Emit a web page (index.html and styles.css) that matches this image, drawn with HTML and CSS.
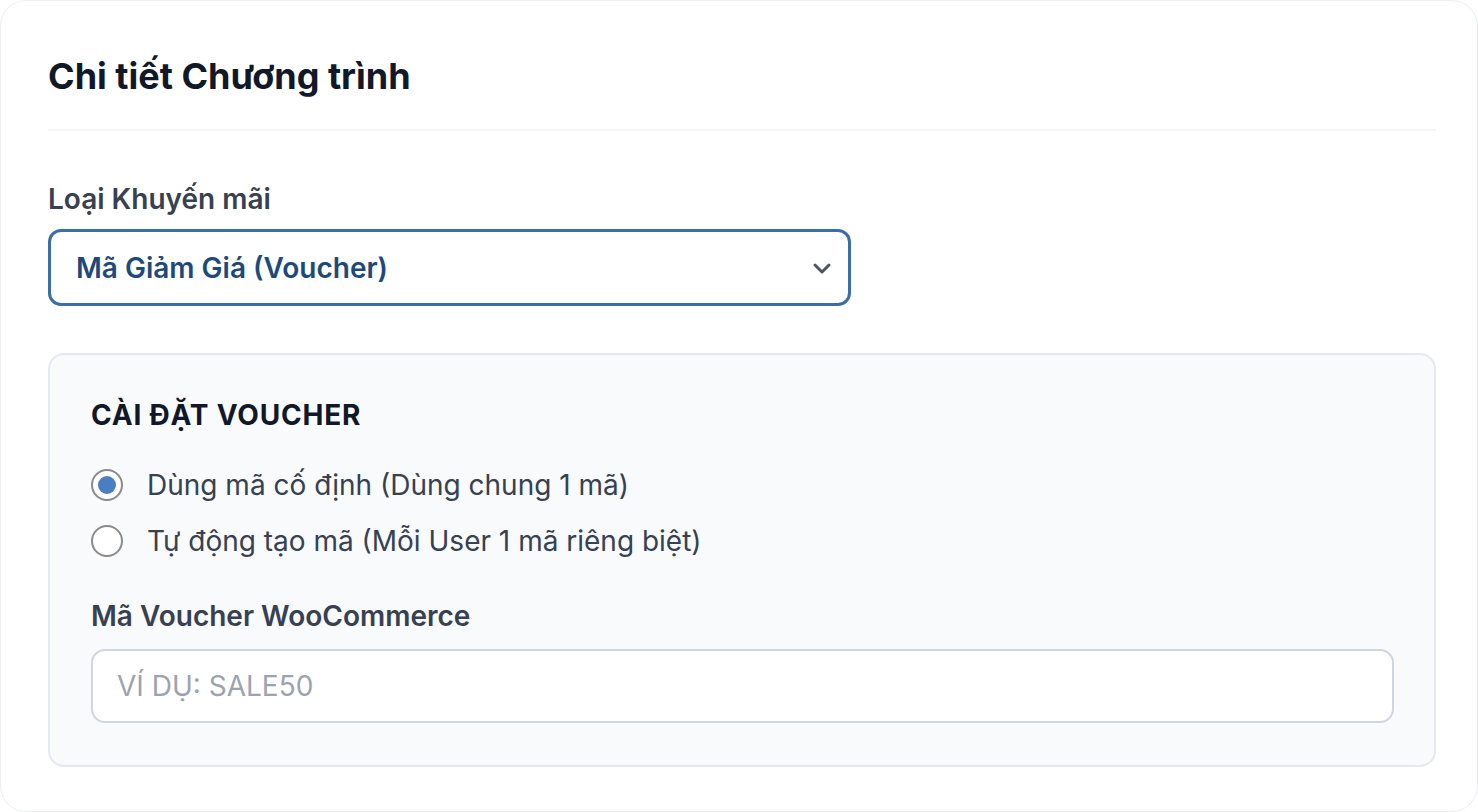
FILE: index.html
```html
<!DOCTYPE html>
<html lang="vi">
<head>
  <meta charset="UTF-8">
  <meta name="viewport" content="width=device-width, initial-scale=1.0">
  <title>Chi tiết Chương trình</title>
  <link rel="stylesheet" href="styles.css">
</head>
<body>
  <div class="card">
    <div class="card-header">
      <h2 class="card-title">Chi tiết Chương trình</h2>
    </div>

    <div class="field">
      <label class="field-label" for="promo-type">Loại Khuyến mãi</label>
      <div class="select-wrap">
        <select id="promo-type" class="select">
          <option>Mã Giảm Giá (Voucher)</option>
          <option>Giảm giá trực tiếp</option>
          <option>Quà tặng</option>
        </select>
        <svg class="chevron" width="24" height="24" viewBox="0 0 24 24" fill="none" stroke="currentColor" stroke-width="3" stroke-linecap="round" stroke-linejoin="round"><path d="M5 9l7 7 7-7"/></svg>
      </div>
    </div>

    <div class="voucher-box">
      <h3 class="box-title">CÀI ĐẶT VOUCHER</h3>
      <div class="radio-list">
        <label class="radio">
          <input type="radio" name="code-mode" checked>
          <span class="radio-dot"></span>
          <span>Dùng mã cố định (Dùng chung 1 mã)</span>
        </label>
        <label class="radio">
          <input type="radio" name="code-mode">
          <span class="radio-dot"></span>
          <span>Tự động tạo mã (Mỗi User 1 mã riêng biệt)</span>
        </label>
      </div>
      <label class="field-label input-label" for="voucher-code">Mã Voucher WooCommerce</label>
      <input id="voucher-code" class="text-input" type="text" placeholder="VÍ DỤ: SALE50">
    </div>
  </div>
</body>
</html>
```

FILE: styles.css
```css
* {
  box-sizing: border-box;
}
body {
  margin: 0;
  padding: 0;
  background: #ffffff;
  font-family: Inter, 'Noto Sans', sans-serif;
  color: #111827;
}
.card {
  width: 1478px;
  height: 812px;
  background: #ffffff;
  border: 1px solid #eceef2;
  border-radius: 26px;
  padding: 0 41px 0 47px;
  overflow: hidden;
}
.card-header {
  padding-top: 54px;
  padding-bottom: 32px;
  border-bottom: 2px solid #f1f5f9;
}
.card-title {
  margin: 0;
  font-size: 36px;
  line-height: 42px;
  font-weight: 700;
  color: #111827;
}
.field {
  margin-top: 52px;
}
.field-label {
  display: block;
  font-size: 28px;
  line-height: 32px;
  font-weight: 600;
  color: #374151;
  margin-bottom: 14px;
}
.select-wrap {
  position: relative;
  width: 803px;
}
.select {
  appearance: none;
  -webkit-appearance: none;
  width: 100%;
  height: 77px;
  padding: 0 60px 0 25px;
  font-family: inherit;
  font-size: 28px;
  font-weight: 600;
  color: #1e4a7a;
  background: #ffffff;
  border: 3px solid #3b6ea8;
  border-radius: 13px;
  outline: none;
}
.chevron {
  position: absolute;
  right: 17px;
  top: 27px;
  color: #4b5563;
  pointer-events: none;
}
.voucher-box {
  margin-top: 47px;
  background: #f8fafc;
  border: 2px solid #e5e9f0;
  border-radius: 16px;
  padding: 44px 40px 42px 41px;
}
.box-title {
  margin: 0 0 38px;
  font-size: 28px;
  line-height: 32px;
  font-weight: 700;
  letter-spacing: 0.8px;
  color: #111827;
}
.radio-list {
  display: flex;
  flex-direction: column;
  gap: 24px;
  margin-bottom: 43px;
}
.radio {
  display: flex;
  align-items: center;
  gap: 24px;
  font-size: 28px;
  line-height: 32px;
  color: #374151;
  cursor: pointer;
}
.radio input {
  display: none;
}
.radio-dot {
  width: 32px;
  height: 32px;
  border-radius: 50%;
  border: 2px solid #8a8a8a;
  background: #ffffff;
  display: flex;
  align-items: center;
  justify-content: center;
  flex-shrink: 0;
}
.radio input:checked + .radio-dot::after {
  content: "";
  width: 18px;
  height: 18px;
  border-radius: 50%;
  background: #4a7ec2;
}
.input-label {
  margin-bottom: 17px;
}
.text-input {
  display: block;
  width: 100%;
  height: 74px;
  padding: 0 24px;
  font-family: inherit;
  font-size: 28px;
  color: #111827;
  background: #ffffff;
  border: 2px solid #cfd6e2;
  border-radius: 14px;
  outline: none;
}
.text-input::placeholder {
  color: #9ca3af;
}
```
